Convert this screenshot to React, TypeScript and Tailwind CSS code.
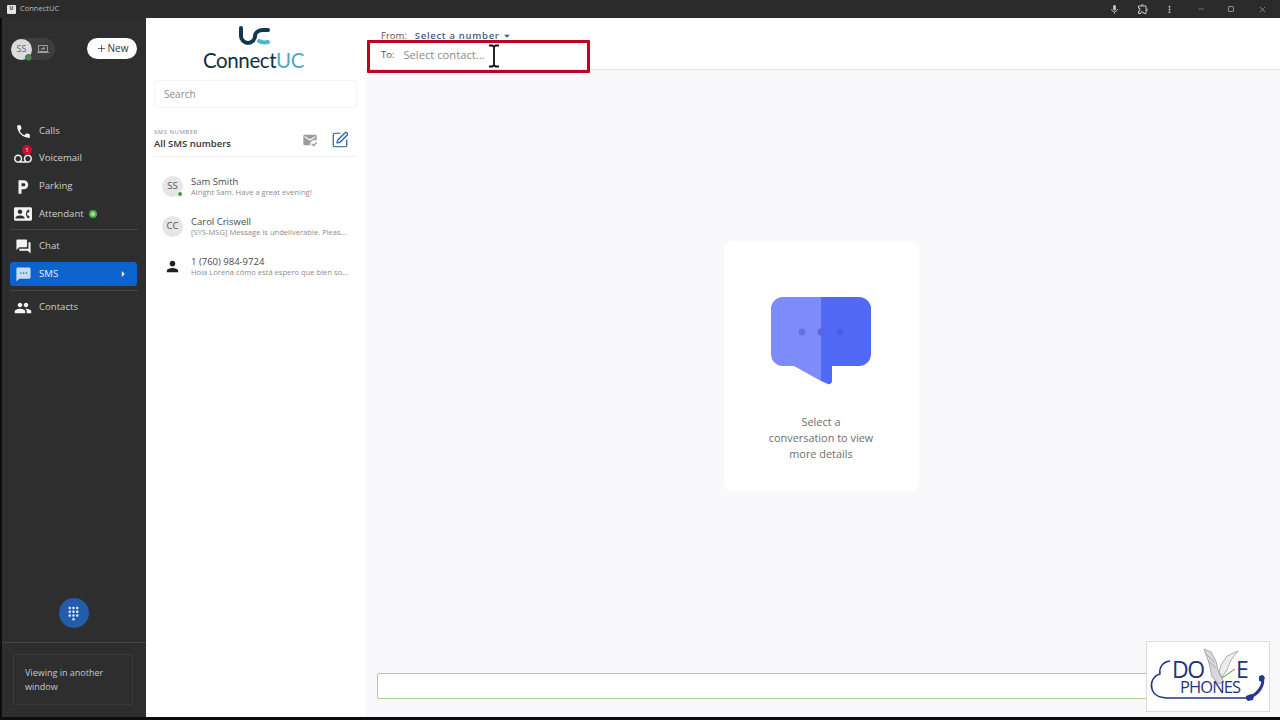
import React from "react";
import { MdPhone, MdVoicemail, MdLocalParking, MdContactPhone, MdQuestionAnswer, MdSms, MdPeople, MdDialpad, MdMarkEmailRead, MdPerson, MdMic, MdOutlineExtension, MdMoreVert, MdArrowRight, MdArrowDropDown, MdOutlineScreenShare } from "react-icons/md";
import { SquarePen, Plus, Minus, X } from "lucide-react";

const font = { fontFamily: '"Open Sans", "Noto Sans", sans-serif' };

function NavRow({ icon, label, h, extra }: { icon: React.ReactNode; label: string; h: string; extra?: React.ReactNode }) {
  return (
    <div className={`flex items-center pl-[9px] ${h}`}>
      <div className="w-[24px] flex justify-center text-[#f2f2f2]">{icon}</div>
      <span className="ml-[4px] text-[9.6px] text-[#cfcfcf]">{label}</span>
      {extra}
    </div>
  );
}

function Conversation({ avatar, name, msg, dot, plain }: { avatar: React.ReactNode; name: string; msg: string; dot?: boolean; plain?: boolean }) {
  return (
    <div className="flex h-[40px] items-center pl-[16px]">
      <div className={`relative w-[21px] h-[21px] rounded-full flex items-center justify-center text-[9.5px] text-[#555] shrink-0 ${plain ? "bg-white" : "bg-[#e6e6e6]"}`}>
        {avatar}
        {dot && <div className="absolute right-0 bottom-0 w-[6px] h-[6px] rounded-full bg-[#3c9a3c] border border-white" />}
      </div>
      <div className="ml-[8px] min-w-0 w-[165px] mt-[1px]">
        <div className="text-[9.5px] leading-[10px] text-[#4a4a4a]">{name}</div>
        <div className="text-[7.6px] leading-[10px] text-[#8c8c8c] whitespace-nowrap">{msg}</div>
      </div>
    </div>
  );
}

export default function App() {
  return (
    <div style={font} className="h-[720px] w-[1280px] overflow-hidden bg-[#0d0d0d] flex flex-col relative">
      <div className="h-[18px] shrink-0 bg-[#2b2b2b] flex items-center pl-[7px] text-[#bdbdbd]">
        <div className="w-[9px] h-[9px] bg-[#e5e5e5] rounded-[1px] flex items-center justify-center text-[5px] font-bold text-[#333]">U</div>
        <span className="ml-[4px] text-[7.5px]">ConnectUC</span>
        <div className="ml-auto flex items-center text-[#c4c4c4]">
          <MdMic size={11} className="mr-[17px]" />
          <MdOutlineExtension size={12} className="mr-[15px]" />
          <MdMoreVert size={11} className="mr-[22px]" />
          <Minus size={8} className="mr-[23px] text-[#8f8f8f]" />
          <div className="w-[6px] h-[6px] border border-[#8f8f8f] rounded-[1px] mr-[24px]" />
          <X size={9} className="mr-[13px] text-[#9a9a9a]" />
        </div>
      </div>

      <div className="flex-1 flex min-h-0 pl-[2px] pb-[3px]">
        {/* Sidebar */}
        <div className="w-[144px] shrink-0 bg-[#2e2e2e] flex flex-col">
          <div className="h-[100px] shrink-0 flex items-start justify-between pl-[9px] pr-[9px] pt-[20px]">
            <div className="relative flex items-center h-[22px] w-[44px] rounded-full bg-[#3d3d3d]">
              <div className="relative w-[21px] h-[21px] rounded-full bg-[#dcdcdc] flex items-center justify-center text-[9px] text-[#666]">
                SS
                <div className="absolute right-0 -bottom-[1px] w-[7px] h-[7px] rounded-full bg-[#3c9a3c] border border-[#555]" />
              </div>
              <MdOutlineScreenShare size={12} className="ml-[5px] text-[#9a9a9a]" />
            </div>
            <div className="h-[21px] w-[50px] rounded-full bg-white flex items-center justify-center text-[10px] text-[#333]">
              <Plus size={11} strokeWidth={1.6} />
              <span className="ml-[1px]">New</span>
            </div>
          </div>
          <NavRow h="h-[27px]" icon={<MdPhone size={17} />} label="Calls" />
          <NavRow
            h="h-[27px]"
            icon={
              <div className="relative">
                <MdVoicemail size={18} />
                <div className="absolute -top-[5px] left-[8px] w-[10px] h-[10px] rounded-full bg-[#c8102e] text-[6px] leading-[10px] text-center text-white">1</div>
              </div>
            }
            label="Voicemail"
          />
          <NavRow h="h-[29px]" icon={<MdLocalParking size={18} />} label="Parking" />
          <NavRow
            h="h-[26px]"
            icon={<MdContactPhone size={18} />}
            label="Attendant"
            extra={<div className="ml-[5px] w-[8px] h-[8px] rounded-full bg-[#b5e08a] border-[2px] border-[#4caf50]" />}
          />
          <div className="mx-[8px] mt-[2px] h-px bg-[#444]" />
          <NavRow h="h-[32px]" icon={<MdQuestionAnswer size={17} />} label="Chat" />
          <div className="ml-[8px] mr-[9px] h-[24px] rounded-[3px] bg-[#0b63ce] flex items-center pl-[1px] pr-[7px]">
            <div className="w-[24px] flex justify-center text-[#c9dcf5]"><MdSms size={17} /></div>
            <span className="ml-[4px] text-[9.6px] text-[#e8eef7]">SMS</span>
            <MdArrowRight size={14} className="ml-auto text-[#e8eef7]" />
          </div>
          <div className="mx-[8px] mt-[4px] h-px bg-[#444]" />
          <NavRow h="h-[33px]" icon={<MdPeople size={18} />} label="Contacts" />
          <div className="flex-1" />
          <div className="flex justify-center pb-[14px] pr-[1px]">
            <div className="w-[30px] h-[30px] rounded-full bg-[#235cab] flex items-center justify-center text-[#dbe9fb]">
              <MdDialpad size={15} />
            </div>
          </div>
          <div className="h-px bg-[#454545]" />
          <div className="pl-[11px] pr-[13px] pt-[11px] pb-[12px]">
            <div className="h-[51px] border border-[#3b3b3b] rounded-[2px] pl-[11px] pt-[11px] text-[9px] leading-[14px] text-[#c9c9c9]">
              Viewing in another<br />window
            </div>
          </div>
        </div>

        {/* List panel */}
        <div className="w-[219px] shrink-0 bg-white flex flex-col">
          <div className="h-[58px] flex flex-col items-center pt-[8px] pr-[4px]">
            <svg width="32" height="20" viewBox="0 0 32 20" fill="none" strokeWidth="4" strokeLinecap="round">
              <path d="M3 2v8a7 7 0 0 0 14 0" stroke="#12384f" />
              <path d="M30 4h-5a8 6 0 0 0-8 6" stroke="#12384f" />
              <path d="M21 15a7 3 0 0 0 9 1" stroke="#4cb8d3" />
            </svg>
            <div className="text-[20.5px] leading-[22px] mt-[3px] tracking-[-0.4px]" style={{ fontFamily: '"Lato", sans-serif' }}>
              <span className="text-[#0f3044]">Connect</span><span className="text-[#4fa9c4]">UC</span>
            </div>
          </div>
          <div className="mx-[8px] mt-[4px] h-[28px] border border-[#f5f5f5] rounded-[2px] flex items-center pl-[9px] text-[10px] text-[#8a8a8a]">Search</div>
          <div className="mx-[8px] mt-[20px] h-[29px] flex items-start justify-between pr-[8px] border-b border-[#f0f0f0]">
            <div>
              <div className="text-[6px] leading-[8px] tracking-[0.5px] text-[#8c8c8c]">SMS NUMBER</div>
              <div className="text-[9.5px] leading-[15px] font-semibold text-[#333]">All SMS numbers</div>
            </div>
            <div className="flex items-center mt-[3px]">
              <MdMarkEmailRead size={16} className="text-[#9c9c9c]" />
              <SquarePen size={18} className="ml-[13px] text-[#1f5f99]" strokeWidth={1.6} />
            </div>
          </div>
          <div className="mt-[9px]">
            <Conversation avatar="SS" name="Sam Smith" msg="Alright Sam. Have a great evening!" dot />
            <Conversation avatar="CC" name="Carol Criswell" msg="[SYS-MSG] Message is undeliverable. Pleas..." />
            <Conversation plain avatar={<MdPerson size={17} className="text-[#222]" />} name="1 (760) 984-9724" msg="Hola Lorena cómo está espero que bien so..." />
          </div>
        </div>

        {/* Main */}
        <div className="flex-1 min-w-0 bg-[#f9f9fb] flex flex-col">
          <div className="h-[52px] shrink-0 bg-white border-b border-[#e2e2e2] pl-[16px] pt-[11px]">
            <div className="flex items-center text-[9.5px] leading-[12px]">
              <span className="text-[#555]">From:</span>
              <span className="ml-[8px] font-semibold tracking-[0.7px] text-[#3f5f86]">Select a number</span>
              <MdArrowDropDown size={14} className="text-[#3f5f86]" />
            </div>
            <div className="flex items-center mt-[5px] text-[9.5px] leading-[14px]">
              <span className="text-[#555]">To:</span>
              <span className="ml-[9px] text-[11.2px] text-[#8a8a8a]">Select contact...</span>
            </div>
          </div>
          <div className="flex-1 flex justify-center pt-[171px] pr-[3px]">
            <div className="w-[195px] h-[250px] bg-white rounded-[8px] flex flex-col items-center pt-[56px]">
              <svg width="100" height="88" viewBox="0 0 100 88">
                <path d="M50 0H12A12 12 0 0 0 0 12v45a12 12 0 0 0 12 12h11l27 15Z" fill="#7d8bfb" />
                <path d="M50 0h38a12 12 0 0 1 12 12v45a12 12 0 0 1-12 12H61v15a3 3 0 0 1-4 3l-7-3Z" fill="#5269f5" />
                <circle cx="31" cy="35" r="3.5" fill="#6670e4" />
                <circle cx="50" cy="35" r="3.5" fill="#5a66e0" />
                <circle cx="69" cy="35" r="3.5" fill="#4b5fe4" />
              </svg>
              <div className="mt-[29px] text-center text-[10.9px] leading-[16px] text-[#6e6e6e]">
                Select a<br />conversation to view<br />more details
              </div>
            </div>
          </div>
          <div className="h-[26px] mb-[18px] ml-[12px] mr-[20px] rounded-[2px] border border-[#a9cf92] bg-white shrink-0" />
        </div>
      </div>

      {/* Red annotation rectangle */}
      <div className="absolute left-[367px] top-[40px] w-[223px] h-[33px] border-[3px] border-[#c00020] rounded-[1px]" />

      {/* I-beam cursor */}
      <svg className="absolute left-[487px] top-[44px]" width="14" height="24" viewBox="0 0 14 24" fill="none">
        <path d="M2 1.5h3.5L7 3l1.5-1.5H12M7 3v18M2 22.5h3.5L7 21l1.5 1.5H12" stroke="#111" strokeWidth="1.8" />
      </svg>

      {/* Dove Phones watermark */}
      <div className="absolute left-[1146px] top-[641px] w-[124px] h-[71px] bg-white border border-[#dcdcdc]" style={{ fontFamily: '"Open Sans", sans-serif' }}>
        <svg className="absolute -left-px -top-px" width="124" height="71" viewBox="0 0 124 71" fill="none">
          <path d="M24 20C16 21 13 27 14 33C7 35 4 42 6 48C8 55 14 57 24 57H103" stroke="#23347f" strokeWidth="1.5" />
          <path d="M58 8l7 3 5 9 2 9 3 7 3 5-5 2-7-7-3-14Z" fill="#d8d8d8" stroke="#7c7c7c" strokeWidth="0.6" />
          <path d="M60 13l8 8M62 20l8 7" stroke="#8c8c8c" strokeWidth="0.6" />
          <path d="M92 10L81 15 75 24 73 31l3 5 5-7 4-10Z" fill="#ececec" stroke="#7c7c7c" strokeWidth="0.6" />
          <path d="M76 37l13-9" stroke="#5b8f3a" strokeWidth="1" />
          <path d="M116 36C119 44 112 53 104 56" stroke="#26388f" strokeWidth="3" strokeLinecap="round" />
          <path d="M113 35l4-1 2 3-2 4-4-1Z" fill="#26388f" />
          <path d="M100 55l5-2 3 2-1 4-5 1-2-2Z" fill="#26388f" />
        </svg>
        <div className="absolute left-[25px] top-[17px] text-[23px] leading-[20px] tracking-[-1.5px] text-[#23347f]">DO</div>
        <div className="absolute left-[89px] top-[17px] text-[23px] leading-[20px] text-[#23347f]">E</div>
        <div className="absolute left-[33px] top-[38px] text-[16.5px] leading-[14px] tracking-[-0.9px] text-[#23347f]">PHONES</div>
      </div>
    </div>
  );
}
